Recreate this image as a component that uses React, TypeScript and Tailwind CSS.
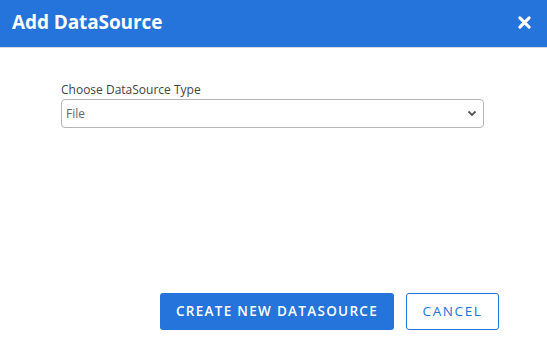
import React, { useState } from "react";

export default function App() {
  const [type, setType] = useState("File");

  return (
    <div
      className="h-[353px] w-[547px] bg-white flex flex-col"
      style={{ fontFamily: '"Open Sans", "Noto Sans", sans-serif' }}
    >
      {/* Header */}
      <div className="h-[48px] bg-[#2574db] flex items-center justify-between pl-[12px] pr-[16px] border-b border-[#dcdcdc]">
        <h1 className="text-[19px] font-bold text-white tracking-[-0.1px] leading-none -mt-[2px]">Add DataSource</h1>
        <button className="text-white -mt-[2px]">
          <svg width="13" height="13" viewBox="0 0 14 14">
            <path d="M2 2 L12 12 M12 2 L2 12" stroke="white" strokeWidth="3.2" strokeLinecap="round" />
          </svg>
        </button>
      </div>

      {/* Body */}
      <div className="flex-1 flex flex-col pl-[61px] pr-[63px] pt-[34px]">
        <label className="text-[12px] leading-[16px] text-[#444]">Choose DataSource Type</label>
        <div className="relative mt-[1px]">
          <select
            value={type}
            onChange={e => setType(e.target.value)}
            className="appearance-none w-full h-[29px] border border-[#b5b5b5] rounded-[4px] pl-[4px] text-[12px] text-[#666] bg-white outline-none"
            style={{ fontFamily: '"Open Sans", "Noto Sans", sans-serif' }}
          >
            <option>File</option>
            <option>Database</option>
            <option>API</option>
          </select>
          <svg className="absolute right-[7px] top-[11px] pointer-events-none" width="10" height="7" viewBox="0 0 10 7">
            <path d="M1.5 1.5 L5 5 L8.5 1.5" stroke="#555" strokeWidth="1.8" fill="none" />
          </svg>
        </div>
      </div>

      {/* Footer */}
      <div className="flex justify-end gap-[12px] pr-[48px] pb-[23px]">
        <button className="h-[37px] w-[234px] rounded-[3px] bg-[#2574db] text-white text-[13.5px] font-semibold tracking-[1.3px]">
          CREATE NEW DATASOURCE
        </button>
        <button className="h-[37px] w-[93px] rounded-[3px] border border-[#2574db] bg-white text-[#2574db] text-[13.5px] tracking-[1.6px]">
          CANCEL
        </button>
      </div>
    </div>
  );
}
